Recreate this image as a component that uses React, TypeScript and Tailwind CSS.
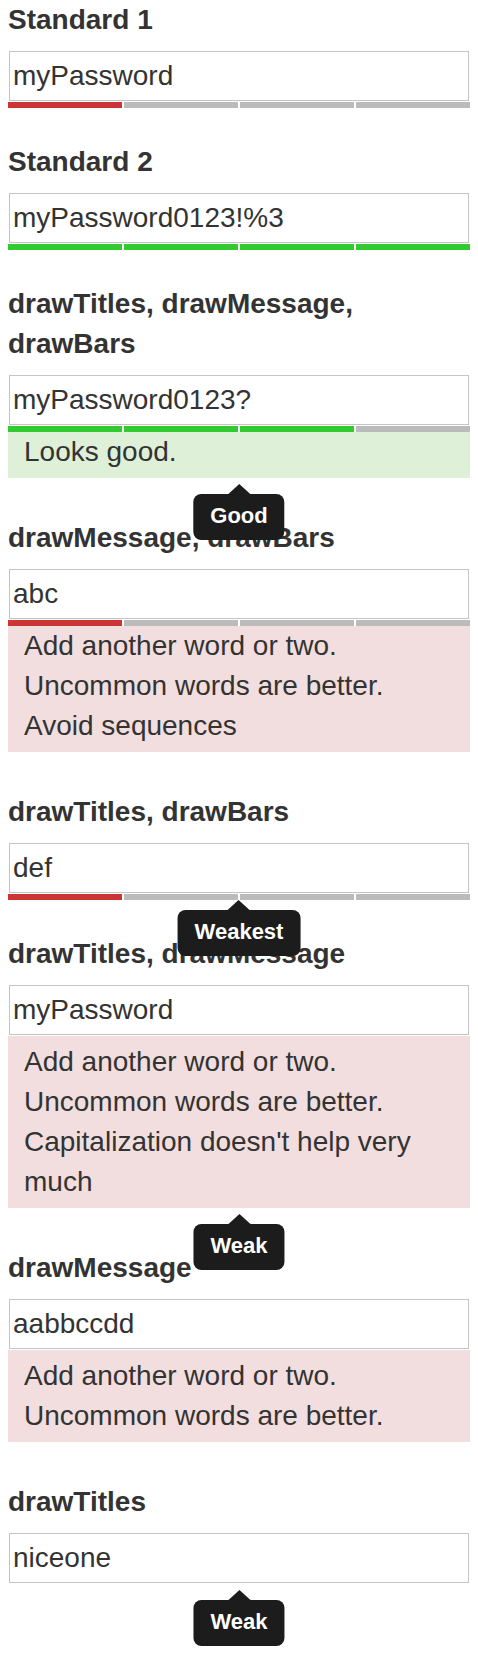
import React from "react";

type Section = {
  title: string;
  value: string;
  bars?: string[];
  message?: { tone: "good" | "bad"; lines: string[] };
  tip?: string;
};

const RED = "bg-[#cd3434]";
const GREEN = "bg-[#31cb31]";
const GRAY = "bg-[#bbbbbb]";

const sections: Section[] = [
  { title: "Standard 1", value: "myPassword", bars: [RED, GRAY, GRAY, GRAY] },
  { title: "Standard 2", value: "myPassword0123!%3", bars: [GREEN, GREEN, GREEN, GREEN] },
  {
    title: "drawTitles, drawMessage, drawBars",
    value: "myPassword0123?",
    bars: [GREEN, GREEN, GREEN, GRAY],
    message: { tone: "good", lines: ["Looks good."] },
    tip: "Good",
  },
  {
    title: "drawMessage, drawBars",
    value: "abc",
    bars: [RED, GRAY, GRAY, GRAY],
    message: {
      tone: "bad",
      lines: ["Add another word or two.", "Uncommon words are better.", "Avoid sequences"],
    },
  },
  {
    title: "drawTitles, drawBars",
    value: "def",
    bars: [RED, GRAY, GRAY, GRAY],
    tip: "Weakest",
  },
  {
    title: "drawTitles, drawMessage",
    value: "myPassword",
    message: {
      tone: "bad",
      lines: [
        "Add another word or two.",
        "Uncommon words are better.",
        "Capitalization doesn't help very much",
      ],
    },
    tip: "Weak",
  },
  {
    title: "drawMessage",
    value: "aabbccdd",
    message: { tone: "bad", lines: ["Add another word or two.", "Uncommon words are better."] },
  },
  { title: "drawTitles", value: "niceone", tip: "Weak" },
];

function Tooltip({ text }: { text: string }) {
  return (
    <div className="absolute top-full left-1/2 -translate-x-1/2 z-10 flex flex-col items-center">
      <div className="w-0 h-0 border-x-[11px] border-x-transparent border-b-[10px] border-b-[#1c1c1c]" />
      <div className="h-[46px] px-[17px] rounded-[8px] bg-[#1c1c1c] text-white text-[22px] font-bold leading-[44px] whitespace-nowrap">
        {text}
      </div>
    </div>
  );
}

function Block({ s }: { s: Section }) {
  const msgBg = s.message?.tone === "good" ? "bg-[#dff0d8]" : "bg-[#f2dede]";
  return (
    <div className="relative flex flex-col">
      <div className="text-[28px] leading-[40px] font-bold">{s.title}</div>
      <div className="mt-[10px] p-px">
        <input
          readOnly
          value={s.value}
          className="block w-full h-[50px] border border-[#c4c4c4] bg-white pl-[3px] text-[28px] text-[#333] outline-none font-['Liberation_Sans',Arial,sans-serif]"
        />
      </div>
      {s.bars ? (
        <div className="flex gap-[2px] h-[6px]">
          {s.bars.map((b, i) => (
            <div key={i} className={`flex-1 ${b}`} />
          ))}
        </div>
      ) : s.message ? null : (
        <div className="h-[6px]" />
      )}
      {s.message && (
        <div
          className={`${msgBg} pl-4 pb-[6px] mb-[6px] text-[28px] leading-[40px] ${
            s.bars ? "" : "pt-[6px]"
          }`}
        >
          {s.message.lines.map((l, i) => (
            <div key={i}>{l}</div>
          ))}
        </div>
      )}
      {s.tip && <Tooltip text={s.tip} />}
    </div>
  );
}

export default function App() {
  return (
    <div className="w-[478px] min-h-[1654px] bg-white px-2 text-[#333] font-['Liberation_Sans',Arial,sans-serif]">
      <div className="flex flex-col gap-[34px]">
        {sections.map((s, i) => (
          <Block key={i} s={s} />
        ))}
      </div>
    </div>
  );
}
